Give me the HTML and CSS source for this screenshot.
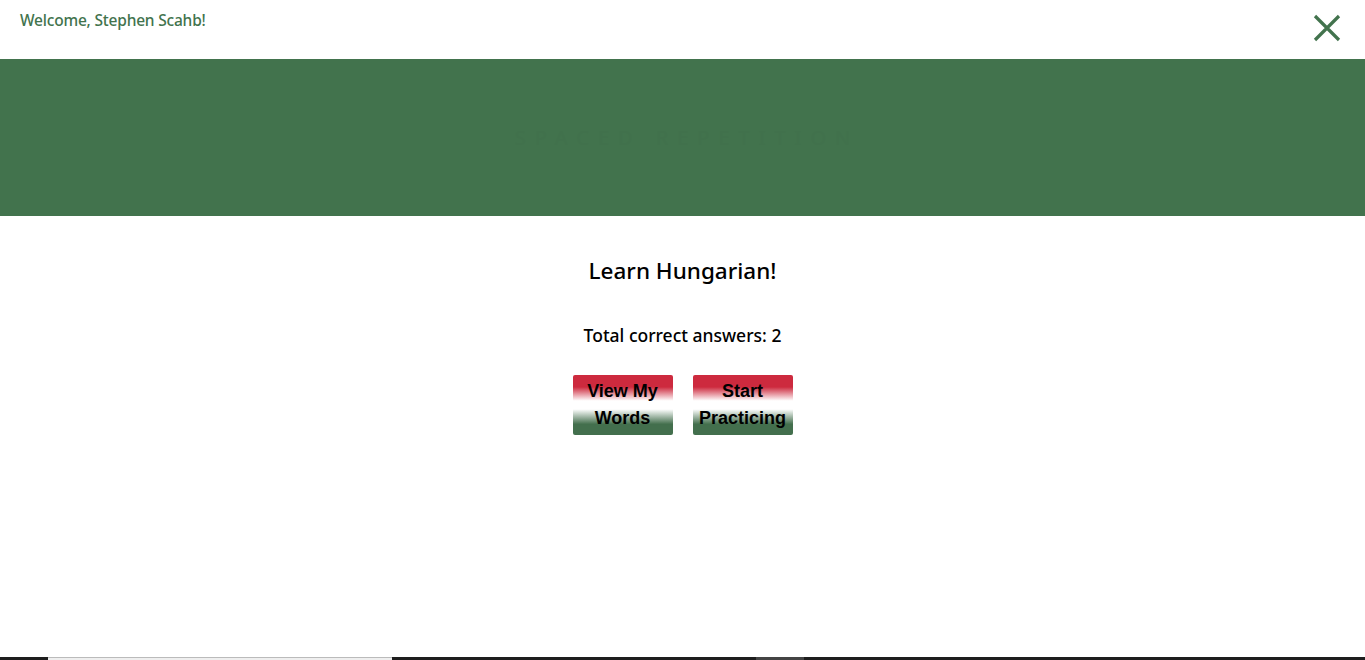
FILE: index.html
```html
<!DOCTYPE html>
<html lang="en">
<head>
<meta charset="utf-8">
<title>Learn Hungarian</title>
<link rel="stylesheet" href="styles.css">
</head>
<body>
<div class="page">
  <header class="topbar">
    <span class="welcome">Welcome, Stephen Scahb!</span>
    <button class="close" aria-label="Close">
      <svg width="28" height="28" viewBox="0 0 28 28"><path d="M2 2 L26 26 M26 2 L2 26" stroke="#42734d" stroke-width="3.2" fill="none"/></svg>
    </button>
  </header>
  <section class="banner">
    <h1 class="banner-title">SPACED REPETITION</h1>
  </section>
  <main class="content">
    <h2 class="title">Learn Hungarian!</h2>
    <p class="score">Total correct answers: 2</p>
    <div class="actions">
      <button class="flag-btn">View My Words</button>
      <button class="flag-btn">Start Practicing</button>
    </div>
  </main>
  <footer class="bottombar">
    <span class="seg dark s1"></span>
    <span class="seg light s2"></span>
    <span class="seg dark s3"></span>
    <span class="seg mid s4"></span>
    <span class="seg dark s5"></span>
  </footer>
</div>
</body>
</html>
```
FILE: styles.css
```css
* { box-sizing: border-box; }
html, body { margin: 0; padding: 0; }
body {
  font-family: "Noto Sans", "Open Sans", sans-serif;
  background: #fff;
  color: #000;
}
.page {
  min-height: 100vh;
  display: flex;
  flex-direction: column;
}
.topbar {
  height: 59px;
  display: flex;
  justify-content: space-between;
  align-items: flex-start;
  padding: 0 24px 0 20px;
}
.welcome {
  color: #42734d;
  font-size: 15.5px;
  font-weight: 500;
  margin-top: 9px;
  letter-spacing: -0.2px;
}
.close {
  background: none;
  border: 0;
  padding: 0;
  margin-top: 14px;
  width: 28px;
  height: 28px;
  cursor: pointer;
}
.banner {
  height: 157px;
  background: #42734d;
  display: flex;
  align-items: center;
  justify-content: center;
}
.banner-title {
  margin: 0;
  font-size: 20px;
  font-weight: 400;
  letter-spacing: 9px;
  color: #41714c;
  padding-left: 9px;
}
.content {
  display: flex;
  flex-direction: column;
  align-items: center;
}
.title {
  margin: 40px 0 0;
  font-size: 22.5px;
  font-weight: 500;
  line-height: 30px;
}
.score {
  margin: 37px 0 0;
  font-size: 17.5px;
  font-weight: 500;
  line-height: 24px;
}
.actions {
  display: flex;
  gap: 20px;
  margin-top: 28px;
}
.flag-btn {
  width: 100px;
  height: 60px;
  border: 0;
  border-radius: 2px;
  padding: 0 2px;
  font-family: "Liberation Sans", Arial, sans-serif;
  font-weight: 700;
  font-size: 18px;
  line-height: 27px;
  color: #000;
  background: linear-gradient(#cd2a3e 0%, #cd2a3e 20%, #ffffff 43%, #ffffff 57%, #436f4d 82%, #436f4d 100%);
  cursor: pointer;
}
.bottombar {
  margin-top: auto;
  height: 3px;
  display: flex;
}
.seg { display: block; height: 100%; }
.dark { background: #1e1e1e; }
.light { background: #efefef; border-top: 1px solid #bbb; }
.mid { background: #444; }
.s1 { width: 48px; }
.s2 { width: 344px; }
.s3 { width: 364px; }
.s4 { width: 48px; }
.s5 { flex: 1; }
```
